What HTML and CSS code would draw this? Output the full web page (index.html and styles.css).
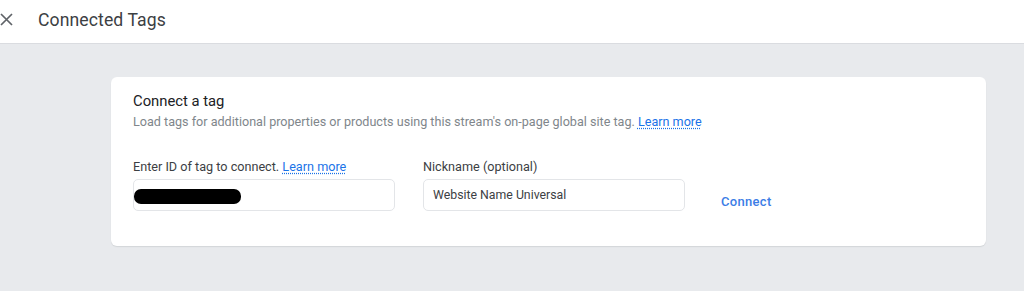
FILE: index.html
```html
<!DOCTYPE html>
<html>
<head>
<meta charset="utf-8">
<link rel="stylesheet" href="styles.css">
</head>
<body>
<header class="topbar">
  <svg class="close" width="13" height="13" viewBox="0 0 13 13"><path d="M1 1 L12 12 M12 1 L1 12" stroke="#5f6368" stroke-width="1.7" fill="none"/></svg>
  <h1 class="title">Connected Tags</h1>
</header>
<main class="page">
  <section class="card">
    <h2 class="card-title">Connect a tag</h2>
    <p class="card-desc">Load tags for additional properties or products using this stream's on-page global site tag. <a class="link" href="#">Learn more</a></p>
    <div class="form-row">
      <div class="field">
        <label class="label">Enter ID of tag to connect. <a class="link" href="#">Learn more</a></label>
        <div class="input"><span class="redact"></span></div>
      </div>
      <div class="field">
        <label class="label">Nickname (optional)</label>
        <div class="input"><span class="value">Website Name Universal</span></div>
      </div>
      <button class="connect">Connect</button>
    </div>
  </section>
</main>
</body>
</html>
```

FILE: styles.css
```css
html, body {
  margin: 0;
  padding: 0;
  height: 100%;
}
body {
  font-family: Roboto, "Liberation Sans", sans-serif;
  background: #e8eaed;
  display: flex;
  flex-direction: column;
}
.topbar {
  height: 43px;
  background: #fff;
  border-bottom: 1px solid #dadce0;
  display: flex;
  align-items: center;
  flex-shrink: 0;
}
.close {
  margin-left: 0;
  margin-top: -4px;
}
.title {
  margin: -4px 0 0 25px;
  font-size: 17.6px;
  font-weight: 400;
  color: #3c4043;
  letter-spacing: 0.1px;
}
.page {
  flex: 1;
  padding: 33px 38px 0 111px;
}
.card {
  background: #fff;
  border-radius: 6px;
  box-shadow: 0 1px 1px rgba(60,64,67,0.12);
  height: 169px;
  box-sizing: border-box;
  padding: 14px 22px 0;
}
.card-title {
  margin: 0;
  font-size: 14.8px;
  font-weight: 400;
  color: #202124;
  line-height: 20px;
}
.card-desc {
  margin: 3px 0 0;
  font-size: 12.6px;
  color: #80868b;
  line-height: 16px;
}
.link {
  color: #1a73e8;
  text-decoration: underline;
  text-decoration-style: dotted;
  text-underline-offset: 2px;
}
.form-row {
  display: flex;
  align-items: flex-end;
  gap: 28px;
  margin-top: 29px;
}
.field {
  display: flex;
  flex-direction: column;
  width: 262px;
}
.label {
  font-size: 12.65px;
  color: #3c4043;
  line-height: 16px;
  margin-bottom: 4px;
}
.input {
  border: 1px solid #e3e5e8;
  border-radius: 5px;
  display: flex;
  align-items: center;
  padding: 0 9px;
  box-sizing: border-box;
  height: 32px;
}
.redact {
  display: block;
  width: 107px;
  height: 15px;
  background: #000;
  border-radius: 7px;
  margin-left: -9px;
  margin-top: 2px;
}
.value {
  font-size: 12.3px;
  color: #3c4043;
}
.connect {
  background: none;
  border: none;
  font-family: inherit;
  font-size: 13px;
  font-weight: 500;
  color: #3b7de6;
  padding: 0;
  margin-left: 8px;
  margin-bottom: 2px;
  letter-spacing: 0.3px;
}
```
